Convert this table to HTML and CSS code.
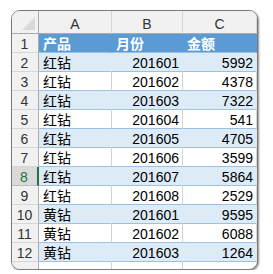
FILE: index.html
```html
<!DOCTYPE html>
<html lang="zh">
<head>
<meta charset="utf-8">
<link rel="stylesheet" href="styles.css">
</head>
<body>
<div class="frame">
  <div class="grid">
    <div class="colhead corner"><span class="tri"></span></div>
    <div class="colhead">A</div>
    <div class="colhead">B</div>
    <div class="colhead">C</div>

    <div class="rowhead">1</div>
    <div class="cell th">产品</div>
    <div class="cell th">月份</div>
    <div class="cell th">金额</div>

    <div class="rowhead">2</div>
    <div class="cell band">红钻</div>
    <div class="cell band num">201601</div>
    <div class="cell band num">5992</div>

    <div class="rowhead">3</div>
    <div class="cell">红钻</div>
    <div class="cell num">201602</div>
    <div class="cell num">4378</div>

    <div class="rowhead">4</div>
    <div class="cell band">红钻</div>
    <div class="cell band num">201603</div>
    <div class="cell band num">7322</div>

    <div class="rowhead">5</div>
    <div class="cell">红钻</div>
    <div class="cell num">201604</div>
    <div class="cell num">541</div>

    <div class="rowhead">6</div>
    <div class="cell band">红钻</div>
    <div class="cell band num">201605</div>
    <div class="cell band num">4705</div>

    <div class="rowhead">7</div>
    <div class="cell">红钻</div>
    <div class="cell num">201606</div>
    <div class="cell num">3599</div>

    <div class="rowhead sel">8</div>
    <div class="cell band">红钻</div>
    <div class="cell band num">201607</div>
    <div class="cell band num">5864</div>

    <div class="rowhead">9</div>
    <div class="cell">红钻</div>
    <div class="cell num">201608</div>
    <div class="cell num">2529</div>

    <div class="rowhead">10</div>
    <div class="cell band">黄钻</div>
    <div class="cell band num">201601</div>
    <div class="cell band num">9595</div>

    <div class="rowhead">11</div>
    <div class="cell">黄钻</div>
    <div class="cell num">201602</div>
    <div class="cell num">6088</div>

    <div class="rowhead">12</div>
    <div class="cell band">黄钻</div>
    <div class="cell band num">201603</div>
    <div class="cell band num">1264</div>

    <div class="rowhead"></div>
    <div class="cell empty"></div>
    <div class="cell empty"></div>
    <div class="cell empty"></div>
  </div>
</div>
</body>
</html>
```
FILE: styles.css
```css
html, body {
  margin: 0;
  padding: 0;
  background: #ffffff;
}

body {
  font-family: "Liberation Sans", "Noto Sans CJK SC", sans-serif;
  font-size: 14px;
  color: #000;
}

.frame {
  margin: 10px 0 0 11px;
  width: 245px;
  height: 258px;
  border: 1px solid #7c7c7c;
  border-radius: 9px;
  overflow: hidden;
  box-shadow: 1px 1px 2px rgba(0, 0, 0, 0.45);
  background: #fff;
}

.grid {
  display: grid;
  grid-template-columns: 27px 73px 71px 74px;
  grid-template-rows: 23px;
  grid-auto-rows: 19px;
}

.grid > div {
  box-sizing: border-box;
  white-space: nowrap;
  overflow: hidden;
}

.colhead {
  background: #f1f1f1;
  border-right: 1px solid #d6d6d6;
  border-bottom: 1px solid #ababab;
  color: #333;
  text-align: center;
  line-height: 26px;
}

.corner {
  position: relative;
  border-right: 1px solid #ababab;
}

.tri {
  position: absolute;
  right: 3px;
  bottom: 3px;
  width: 0;
  height: 0;
  border-left: 13px solid transparent;
  border-bottom: 13px solid #d9d9d9;
}

.rowhead {
  background: #f1f1f1;
  border-right: 1px solid #ababab;
  border-bottom: 1px solid #d6d6d6;
  color: #333;
  text-align: center;
  line-height: 20px;
  padding-right: 1px;
}

.rowhead.sel {
  background: #d9d9d9;
  color: #217346;
  border-right: 2px solid #217346;
  border-bottom-color: #bdbdbd;
}

.cell {
  border-right: 1px solid #d4d4d4;
  border-bottom: 1px solid #9bc2e6;
  line-height: 20px;
  padding: 0 3px 0 4px;
}

.cell.th {
  background: #5b9bd5;
  color: #fff;
  font-weight: bold;
  border-right-color: #5b9bd5;
}

.cell.band {
  background: #ddebf7;
  border-right-color: #ddebf7;
}

.cell.num {
  text-align: right;
}

.cell.empty {
  border-bottom: none;
}
```
